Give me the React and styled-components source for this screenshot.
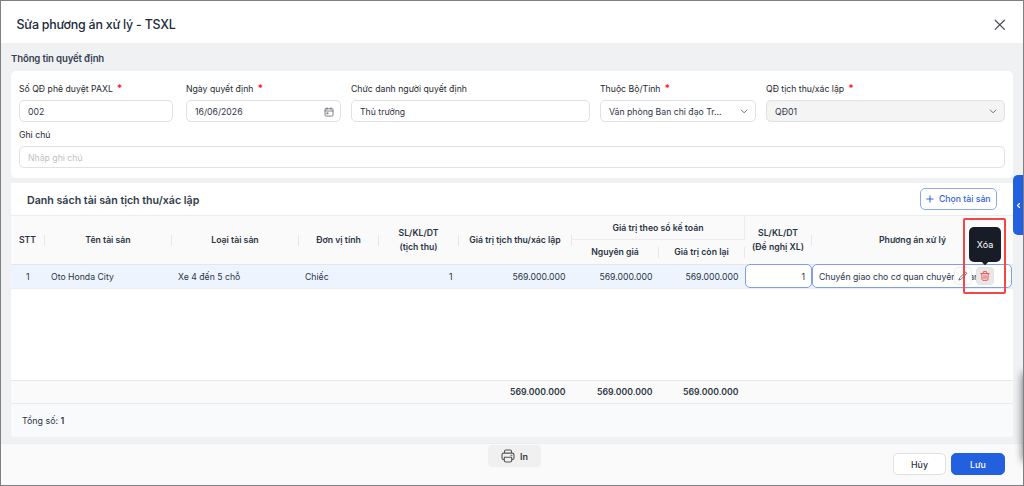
import React from "react";
import styled, { createGlobalStyle } from "styled-components";

const Global = createGlobalStyle`
  * { box-sizing: border-box; }
  body { margin: 0; font-family: Inter, "Liberation Sans", sans-serif; font-size: 8.7px; color: #2b3444; }
  button { font-family: inherit; }
`;

const Dialog = styled.div`
  position: relative;
  width: 1024px;
  height: 486px;
  overflow: hidden;
  display: flex;
  flex-direction: column;
  background: #f0f1f3;
  border: 1px solid #808084;
`;
const Header = styled.header`
  height: 42px;
  flex: none;
  display: flex;
  align-items: center;
  justify-content: space-between;
  padding: 5px 17px 0 15.5px;
  background: #fff;
`;
const Title = styled.h1`
  margin: 0;
  font-size: 12.4px;
  font-weight: 500;
  letter-spacing: -0.22px;
  color: #202a3b;
`;
const Content = styled.main`
  flex: none;
  height: 400px;
  padding: 0 10px;
  display: flex;
  flex-direction: column;
`;
const SectionTitle = styled.h2`
  margin: 0;
  height: 28px;
  line-height: 32px;
  font-size: 9.6px;
  font-weight: 600;
  letter-spacing: -0.14px;
  color: #364052;
`;
const FormPanel = styled.section`
  height: 107px;
  padding: 10px 8px 0;
  border-radius: 5px;
  background: #fff;
`;
const FormRow = styled.div`
  display: grid;
  grid-template-columns: 154px 155px 239px 156px 239px;
  column-gap: 10px;
  & + & { margin-top: 5px; grid-template-columns: 1fr; }
`;
const Field = styled.label`
  display: block;
  min-width: 0;
  margin-left: ${(p) => p.$shift || 0}px;
  margin-right: -${(p) => p.$shift || 0}px;
`;
const Label = styled.div`
  height: 19px;
  line-height: 17px;
  color: #26292f;
  white-space: nowrap;
`;
const Required = styled.span`
  margin-left: 4px;
  color: #ff1a1f;
  font-size: 10px;
  line-height: 10px;
  font-weight: 700;
`;
const Control = styled.div`
  height: 22px;
  display: flex;
  align-items: center;
  justify-content: space-between;
  padding: 1px 6px 0 8px;
  border: 1px solid #e0e1e4;
  border-radius: 5px;
  background: ${(p) => (p.$disabled ? "#f4f4f4" : "#fff")};
  color: ${(p) => (p.$placeholder ? "#bfbfc3" : "#2f3848")};
  white-space: nowrap;
`;
const TablePanel = styled.section`
  margin-top: 5px;
  height: 254px;
  flex: none;
  display: flex;
  flex-direction: column;
  border-radius: 0 0 4px 4px;
  background: #fff;
  overflow: hidden;
`;
const Toolbar = styled.div`
  height: 32px;
  flex: none;
  display: flex;
  align-items: center;
  justify-content: space-between;
  padding: 0 16px;
`;
const TableTitle = styled.h2`
  margin: 3px 0 0;
  font-size: 10.65px;
  font-weight: 600;
  color: #323b4b;
`;
const AddButton = styled.button`
  display: flex;
  align-items: center;
  justify-content: center;
  gap: 4.5px;
  width: 77px;
  height: 22px;
  padding: 0;
  border: 1px solid #8aa7ef;
  border-radius: 5px;
  background: #fff;
  color: #2f62dc;
  font-size: 8.7px;
  font-weight: 500;
  white-space: nowrap;
`;
const columns = "34px 127px 127px 80px 80px 113px 87px 86px 67px 1fr";
const TableHead = styled.div`
  flex: none;
  display: grid;
  grid-template-columns: ${columns};
  grid-template-rows: 24px 24px;
  border-top: 1px solid #ececee;
  border-bottom: 1px solid #e4e6ea;
  box-sizing: content-box;
  height: 48px;
  background: #fafafa;
`;
const HeadCell = styled.div`
  grid-row: ${(p) => p.$row || "1 / 3"};
  grid-column: ${(p) => p.$col};
  display: flex;
  align-items: center;
  text-align: center;
  font-weight: 600;
  line-height: 14px;
  white-space: nowrap;
  border-bottom: ${(p) => (p.$group ? "1px solid #ececee" : "0")};
  border-right: ${(p) => (p.$group ? "1px solid #ececee" : "0")};
  & > span { flex: 1; min-width: 0; display: flex; justify-content: center; }
  &::after {
    content: "";
    display: ${(p) => (p.$last || p.$group ? "none" : "block")};
    width: 1px;
    height: 11px;
    background: #e8e8ea;
  }
`;
const Row = styled.div`
  height: 24px;
  flex: none;
  display: grid;
  grid-template-columns: ${columns};
  align-items: stretch;
  background: #edf4fe;
  border-bottom: 1px solid #e9ecf1;
`;
const Cell = styled.div`
  display: flex;
  align-items: center;
  justify-content: ${(p) => p.$align || "flex-start"};
  padding: 0 6.5px 0 6px;
  font-weight: ${(p) => (p.$bold ? 600 : 400)};
  white-space: nowrap;
`;
const EditCell = styled(Cell)`
  position: relative;
  border: 1px solid #7f9fec;
  border-radius: 5px;
  height: 24px;
  background: #fff;
  margin: -1px ${(p) => (p.$wide ? 1 : 0)}px 0 0;
  padding: 1px 6px 0;
`;
const Space = styled.div`
  flex: 1;
`;
const Summary = styled(Row)`
  background: #fafafa;
  border-top: 1px solid #e9e9eb;
  border-bottom: 1px solid #e9e9eb;
`;
const Total = styled.div`
  height: 33px;
  flex: none;
  display: flex;
  align-items: center;
  padding: 0 11px;
  background: #f9fafc;
  font-size: 8.9px;
  white-space: pre;
  b { font-weight: 600; }
`;
const Footer = styled.footer`
  flex: 1;
  position: relative;
  display: flex;
  align-items: center;
  justify-content: flex-end;
  gap: 5px;
  padding: 0 18px 1px;
  border-top: 1px solid #ededee;
  background: #fafafa;
`;
const FooterButton = styled.button`
  width: ${(p) => (p.$primary ? 54 : 53)}px;
  height: 22px;
  padding: 0;
  border: 1px solid ${(p) => (p.$primary ? "#2360df" : "#e1e1e3")};
  border-radius: 5px;
  background: ${(p) => (p.$primary ? "#2360df" : "#fff")};
  color: ${(p) => (p.$primary ? "#fff" : "#30333a")};
  font-size: 8.8px;
  font-weight: 500;
`;
const PrintButton = styled.button`
  position: absolute;
  left: 487px;
  top: 1px;
  width: 53px;
  height: 22px;
  display: flex;
  align-items: center;
  justify-content: center;
  gap: 5px;
  padding: 0;
  border: 0;
  border-radius: 4px;
  background: #f0f0f0;
  color: #3d3d3f;
  font-size: 9px;
  font-weight: 600;
`;
const ActionButton = styled.span`
  position: absolute;
  left: ${(p) => p.$left}px;
  top: 2px;
  width: 18px;
  height: 18px;
  display: flex;
  align-items: center;
  justify-content: center;
  border-radius: 4px;
  background: ${(p) => (p.$active ? "#e8e8e9" : "#fff")};
  border: 1px solid ${(p) => (p.$active ? "#e3e3e5" : "#ececee")};
`;
const Tooltip = styled.div`
  position: absolute;
  left: 968px;
  top: 226px;
  width: 32px;
  height: 35px;
  display: flex;
  align-items: center;
  justify-content: center;
  border-radius: 5px;
  padding-bottom: 1px;
  background: #171c27;
  color: #fff;
  font-size: 9px;
  &::after {
    content: "";
    position: absolute;
    left: 13px;
    bottom: -2px;
    width: 6px;
    height: 6px;
    background: #171c27;
    transform: rotate(45deg);
  }
`;
const Highlight = styled.div`
  position: absolute;
  left: 962px;
  top: 217px;
  width: 43px;
  height: 76px;
  border: 2px solid #f04848;
  border-radius: 2px;
`;
const SideTab = styled.div`
  position: absolute;
  right: 0;
  top: 174px;
  width: 10px;
  height: 60px;
  display: flex;
  align-items: center;
  justify-content: center;
  border-radius: 5px 0 0 5px;
  background: #2360df;
`;
const EdgeShade = styled.div`
  position: absolute;
  left: 1024px;
  top: 374px;
  width: 8px;
  height: 84px;
  box-shadow: 0 0 9px 2px rgba(0, 0, 0, 0.6);
`;

const Icon = ({ size, color, width = 1.5, box = 24, children }) => (
  <svg width={size} height={size} viewBox={`0 0 ${box} ${box}`} fill="none" stroke={color} strokeWidth={width} strokeLinecap="round" strokeLinejoin="round">
    {children}
  </svg>
);
const Chevron = () => (
  <Icon size={9} color="#6c717b" width={1} box={9}><path d="M1.3 3 4.1 5.800 6.900 3" /></Icon>
);
const Calendar = () => (
  <Icon size={10} color="#73777f" width={0.9} box={10}>
    <path d="M2 1.7h6q1 0 1 1v5.4q0 1-1 1H2q-1 0-1-1V2.7q0-1 1-1ZM1 4h8M3 .7v1.8M7 .7v1.8" />
    <path d="M3.1 5.9h1v1h-1z" />
  </Icon>
);
const Pencil = () => (
  <Icon size={10} color="#55585f" width={0.8} box={10}>
    <path d="M1.2 8.8 1.7 6.8 7 1.5q.7-.6 1.4 0t0 1.4L3.2 8.2 1.2 8.8ZM6.1 2.4l1.4 1.4" />
  </Icon>
);
const Trash = () => (
  <Icon size={10} color="#f05252" width={1} box={10}>
    <path d="M.8 2.6h8.4M3.3 2.5V1q0-.4.4-.4h2.6q.4 0 .4.4v1.5M1.7 2.7l.4 5.8q.1.8.9.8h4q.8 0 .9-.8l.4-5.8M4 4.6v2.8M6 4.6v2.8" />
  </Icon>
);
const Printer = () => (
  <Icon size={14} color="#555558" width={1.1} box={14}>
    <path d="M3.5 4V2.4Q3.5 1 5 1h4q1.500 0 1.500 1.400V4M3.300 10.600H2.600Q1 10.600 1 9V5.800Q1 4.100 2.700 4.100h8.600Q13 4.100 13 5.800V9q0 1.600-1.600 1.600h-.7M3.300 8.300h7.400v2.900q0 1.800-1.800 1.800H5.100q-1.800 0-1.800-1.800ZM10 6.200h.9" />
  </Icon>
);

const FormField = ({ label, required, value, placeholder, disabled, icon, shift }) => (
  <Field $shift={shift}>
    <Label>{label}{required && <Required>*</Required>}</Label>
    <Control $disabled={disabled} $placeholder={!value}>
      <span>{value || placeholder}</span>
      {icon}
    </Control>
  </Field>
);

export default function App() {
  return (
    <>
      <Global />
      <Dialog>
        <Header>
          <Title>Sửa phương án xử lý - TSXL</Title>
          <Icon size={12} color="#4c4f55" width={1.3} box={12}><path d="m1.200 1.200 9.200 9.200m0-9.200-9.200 9.200" /></Icon>
        </Header>
        <Content>
          <SectionTitle>Thông tin quyết định</SectionTitle>
          <FormPanel>
            <FormRow>
              <FormField label="Số QĐ phê duyệt PAXL" required value="002" />
              <FormField label="Ngày quyết định" required value="16/06/2026" icon={<Calendar />} shift={3} />
              <FormField label="Chức danh người quyết định" value="Thủ trưởng" shift={3} />
              <FormField label="Thuộc Bộ/Tỉnh" required value="Văn phòng Ban chỉ đạo Tr..." icon={<Chevron />} shift={3} />
              <FormField label="QĐ tịch thu/xác lập" required value="QĐ01" disabled icon={<Chevron />} shift={3} />
            </FormRow>
            <FormRow>
              <FormField label="Ghi chú" placeholder="Nhập ghi chú" />
            </FormRow>
          </FormPanel>
          <TablePanel>
            <Toolbar>
              <TableTitle>Danh sách tài sản tịch thu/xác lập</TableTitle>
              <AddButton>
                <Icon size={8} color="#2f62dc" width={1} box={8}><path d="M4 .8v6.400M.8 4h6.400" /></Icon>
                Chọn tài sản
              </AddButton>
            </Toolbar>
            <TableHead>
              <HeadCell $col="1"><span>STT</span></HeadCell>
              <HeadCell $col="2"><span>Tên tài sản</span></HeadCell>
              <HeadCell $col="3"><span>Loại tài sản</span></HeadCell>
              <HeadCell $col="4"><span>Đơn vị tính</span></HeadCell>
              <HeadCell $col="5"><span>SL/KL/DT<br />(tịch thu)</span></HeadCell>
              <HeadCell $col="6"><span>Giá trị tịch thu/xác lập</span></HeadCell>
              <HeadCell $col="7 / 9" $row="1" $group><span>Giá trị theo sổ kế toán</span></HeadCell>
              <HeadCell $col="7" $row="2"><span>Nguyên giá</span></HeadCell>
              <HeadCell $col="8" $row="2"><span>Giá trị còn lại</span></HeadCell>
              <HeadCell $col="9"><span>SL/KL/DT<br />(Đề nghị XL)</span></HeadCell>
              <HeadCell $col="10" $last><span>Phương án xử lý</span></HeadCell>
            </TableHead>
            <Row>
              <Cell $align="center">1</Cell>
              <Cell>Oto Honda City</Cell>
              <Cell>Xe 4 đến 5 chỗ</Cell>
              <Cell>Chiếc</Cell>
              <Cell $align="flex-end">1</Cell>
              <Cell $align="flex-end">569.000.000</Cell>
              <Cell $align="flex-end">569.000.000</Cell>
              <Cell $align="flex-end">569.000.000</Cell>
              <EditCell $align="flex-end">1</EditCell>
              <EditCell $wide>
                Chuyển giao cho cơ quan chuyên ngàn
                <ActionButton $left={141}><Pencil /></ActionButton>
                <ActionButton $left={163} $active><Trash /></ActionButton>
              </EditCell>
            </Row>
            <Space />
            <Summary>
              <Cell /><Cell /><Cell /><Cell /><Cell />
              <Cell $align="flex-end" $bold>569.000.000</Cell>
              <Cell $align="flex-end" $bold>569.000.000</Cell>
              <Cell $align="flex-end" $bold>569.000.000</Cell>
              <Cell /><Cell />
            </Summary>
            <Total>Tổng số: <b>1</b></Total>
          </TablePanel>
        </Content>
        <Footer>
          <PrintButton><Printer />In</PrintButton>
          <FooterButton>Hủy</FooterButton>
          <FooterButton $primary>Lưu</FooterButton>
        </Footer>
        <Tooltip>Xóa</Tooltip>
        <Highlight />
        <SideTab>
          <Icon size={7} color="#fff" width={1.1} box={7}><path d="M4.500 1.500 2.500 3.500l2 2" /></Icon>
        </SideTab>
        <EdgeShade />
      </Dialog>
    </>
  );
}
